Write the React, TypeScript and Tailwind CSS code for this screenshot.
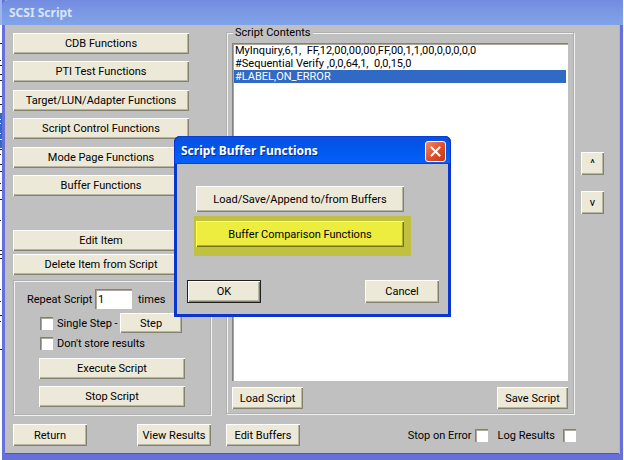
import type { ButtonHTMLAttributes, ReactNode } from "react";

const raised =
  "flex items-center justify-center whitespace-nowrap bg-[#ece9d8] text-black shadow-[inset_1px_1px_0_#ffffff,inset_-1px_-1px_0_#84826f,inset_-2px_-2px_0_#b8b5a4]";
const sunken =
  "bg-white shadow-[inset_1px_1px_0_#808080,inset_2px_2px_0_#aca899,inset_-1px_-1px_0_#ffffff]";

function Button({ className = "", children, ...rest }: ButtonHTMLAttributes<HTMLButtonElement>) {
  return (
    <button type="button" className={`${raised} ${className}`} {...rest}>
      {children}
    </button>
  );
}

function Check({ id }: { id: string }) {
  return <input id={id} type="checkbox" className={`size-[13px] shrink-0 appearance-none ${sunken}`} />;
}

function Etched({ className = "", children }: { className?: string; children: ReactNode }) {
  return (
    <div className={`border border-[#b0b0b0] shadow-[inset_1px_1px_0_#f0f0f0,1px_1px_0_#f0f0f0] ${className}`}>
      {children}
    </div>
  );
}

const functionGroups = [
  "CDB Functions",
  "PTI Test Functions",
  "Target/LUN/Adapter Functions",
  "Script Control Functions",
  "Mode Page Functions",
  "Buffer Functions",
];

const scriptLines = [
  "MyInquiry,6,1,  FF,12,00,00,00,FF,00,1,1,00,0,0,0,0,0",
  "#Sequential Verify ,0,0,64,1,  0,0,15,0",
  "#LABEL,ON_ERROR",
];

function BackgroundEdge() {
  return (
    <svg className="w-[2px] shrink-0 self-stretch" aria-hidden="true">
      <rect width="2" height="25" fill="#9bb4ea" />
      <rect y="113" width="2" height="35" fill="#316ac5" />
      <path
        d="M0 43.5h2M0 60.5h1M0 65.5h2M0 74.5h2M0 80.5h2M0 96.5h2M0 104.5h2M0 149.5h2M0 154.5h1M0 164.5h2M0 171.5h2M0 183.5h1M0 190.5h2M0 199.5h2M0 220.5h1M0 250.5h2M0 254.5h2M0 258.5h2M0 289.5h1M0 301.5h1M0 315.5h2M0 321.5h1M0 349.5h2"
        stroke="#222"
        strokeWidth="1"
      />
      <path d="M0 119.5h1M0 123.5h1M0 133.5h1M0 139.5h2" stroke="#fff" strokeWidth="1" />
    </svg>
  );
}

function BufferDialog() {
  return (
    <section
      role="dialog"
      aria-labelledby="dialog-title"
      className="absolute left-[174px] top-[136px] w-[277px] rounded-t-md border-x-[3px] border-b-[3px] border-[#0a35d0] bg-[#c0c0c0]"
    >
      <header className="-mx-[3px] flex h-7 items-center justify-between rounded-t-md border-x border-[#0a35d0] bg-linear-to-b from-[#0a4fe0] via-[#0058ee] to-[#0560fa] pl-1.5 pr-1 pt-0.5 shadow-[inset_0_1px_0_#0a3fd0,inset_0_-1px_0_#0446c8]">
        <h2
          id="dialog-title"
          className="font-['Noto_Sans',sans-serif] text-[12px] leading-4 font-bold text-white [text-shadow:1px_1px_0_#0a2a90]"
        >
          Script Buffer Functions
        </h2>
        <button
          type="button"
          aria-label="Close"
          className="flex size-[21px] items-center justify-center rounded-[3px] border border-white bg-linear-to-br from-[#ee8a6a] via-[#e0502e] to-[#c03a18]"
        >
          <svg viewBox="0 0 19 19" className="size-[19px]" fill="none" stroke="#fff" strokeWidth="2" strokeLinecap="square">
            <path d="M5.5 5.5l8 8M13.5 5.5l-8 8" />
          </svg>
        </button>
      </header>
      <div className="flex flex-col pt-[22px]">
        <Button className="ml-[19px] h-[26px] w-[208px]">Load/Save/Append to/from Buffers</Button>
        <div className="ml-[17px] mt-1 h-10 w-[217px] bg-[#c1c140] pl-0.5 pt-[5px]">
          <button
            type="button"
            className="flex h-[26px] w-[208px] items-center justify-center bg-[#eded40] shadow-[inset_1px_1px_0_#ffff50,inset_-1px_-1px_0_#74741c,inset_-2px_-2px_0_#adad36]"
          >
            Buffer Comparison Functions
          </button>
        </div>
        <div className="mb-[11px] mt-6 flex justify-between pl-2.5 pr-[9px]">
          <Button className="h-[23px] w-[74px] border border-[#202020]">OK</Button>
          <Button className="h-[23px] w-[74px]">Cancel</Button>
        </div>
      </div>
    </section>
  );
}

export default function App() {
  return (
    <div className="relative flex min-h-screen bg-white font-[Roboto,'Liberation_Sans',sans-serif] text-[11px] leading-[13px] text-black">
      <BackgroundEdge />
      <main className="mr-px flex flex-1 flex-col border-x-[3px] border-b-[6px] border-[#6670dc] bg-[#c0c0c0] shadow-[inset_-1px_0_0_#b0b0d8,inset_0_-1px_0_#4a54c4]">
        <header className="-mx-[3px] flex h-[25px] items-center rounded-tl-md bg-linear-to-b from-[#728be0] via-[#7b98e4] to-[#80a4ea] pl-[7px]">
          <h1 className="font-['Noto_Sans',sans-serif] text-[12px] leading-4 font-bold text-[#d8e4f8]">SCSI Script</h1>
        </header>
        <div className="flex flex-1 pl-2 pr-4">
          <div className="flex w-[198px] shrink-0 flex-col pb-[7px] pt-2">
            <div className="flex h-[163px] w-44 flex-col justify-between">
              {functionGroups.map((name) => (
                <Button key={name} className="h-[21px]">
                  {name}
                </Button>
              ))}
            </div>
            <div className="mt-[34px] flex w-44 flex-col gap-[3px]">
              <Button className="h-[21px]">Edit Item</Button>
              <Button className="h-[21px]">Delete Item from Script</Button>
            </div>
            <Etched className="mt-[5px] flex h-[135px] flex-col pl-[13px] pt-2">
              <div className="flex items-center">
                <label htmlFor="repeat" className="w-[65px] whitespace-nowrap">
                  Repeat Script
                </label>
                <input
                  id="repeat"
                  type="text"
                  defaultValue="1"
                  className={`ml-[3px] h-5 w-[37px] px-[3px] ${sunken}`}
                />
                <span className="ml-1.5">times</span>
              </div>
              <div className="mt-1 flex items-center pl-[13px]">
                <Check id="single" />
                <label htmlFor="single" className="ml-1 w-[63px] whitespace-nowrap">
                  Single Step -
                </label>
                <Button className="h-5 w-[62px]">Step</Button>
              </div>
              <div className="mt-1 flex items-center gap-1 pl-[13px]">
                <Check id="nostore" />
                <label htmlFor="nostore">Don't store results</label>
              </div>
              <Button className="ml-3 mt-2 h-[21px] w-[146px] shrink-0">Execute Script</Button>
              <Button className="ml-3 mt-[7px] h-[21px] w-[146px] shrink-0">Stop Script</Button>
            </Etched>
            <div className="mt-[9px] flex justify-between">
              <Button className="h-[22px] w-[74px]">Return</Button>
              <Button className="h-[22px] w-[74px]">View Results</Button>
            </div>
          </div>

          <div className="ml-[15px] flex flex-1 flex-col pb-2 pt-[7px]">
            <Etched className="flex flex-1 flex-col px-[5px] pb-1">
              <h2 className="-mt-[7px] ml-px self-start bg-[#c0c0c0] px-0.5">Script Contents</h2>
              <ul className={`mt-1 flex-1 px-0.5 py-px ${sunken}`}>
                {scriptLines.map((line, i) => (
                  <li
                    key={line}
                    className={`whitespace-pre pl-px ${i === 2 ? "bg-[#316ac5] text-white" : ""}`}
                  >
                    {line}
                  </li>
                ))}
              </ul>
              <div className="mt-1.5 flex justify-between">
                <Button className="h-[22px] w-[71px]">Load Script</Button>
                <Button className="h-[22px] w-[71px]">Save Script</Button>
              </div>
            </Etched>
            <div className="mt-2.5 flex items-center">
              <Button className="h-[22px] w-[74px]">Edit Buffers</Button>
              <div className="-mr-0.5 ml-auto flex items-center">
                <label htmlFor="stop">Stop on Error</label>
                <span className="ml-[3px] mr-2.5 flex">
                  <Check id="stop" />
                </span>
                <label htmlFor="log" className="mr-2">
                  Log Results
                </label>
                <Check id="log" />
              </div>
            </div>
          </div>

          <div className="ml-[7px] flex w-[23px] shrink-0 flex-col gap-4 pt-[127px]">
            <Button className="h-[23px]" aria-label="Move up">
              ^
            </Button>
            <Button className="h-[23px]" aria-label="Move down">
              v
            </Button>
          </div>
        </div>
      </main>
      <BufferDialog />
    </div>
  );
}
